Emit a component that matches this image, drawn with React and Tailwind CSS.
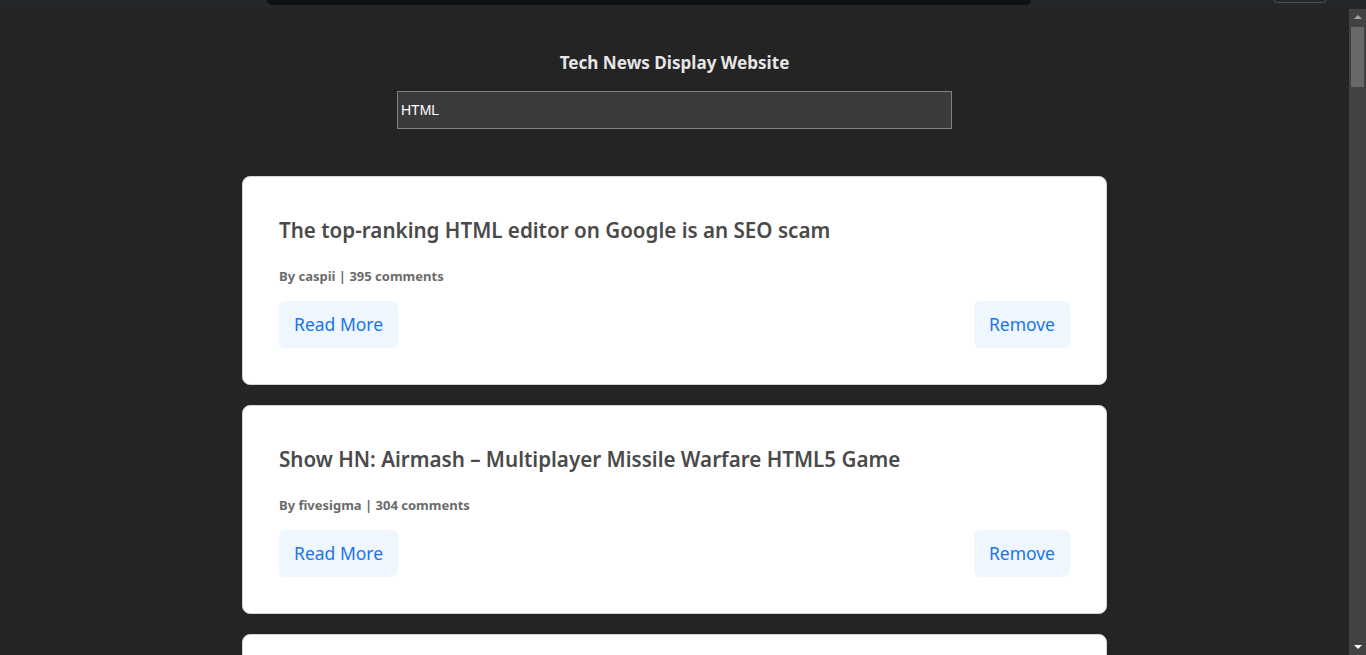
import { useState } from "react";

const STORIES = [
  {
    id: 1,
    title: "The top-ranking HTML editor on Google is an SEO scam",
    author: "caspii",
    comments: 395,
  },
  {
    id: 2,
    title: "Show HN: Airmash – Multiplayer Missile Warfare HTML5 Game",
    author: "fivesigma",
    comments: 304,
  },
  {
    id: 3,
    title: "HTML is the Web",
    author: "pcr910303",
    comments: 290,
  },
];

function StoryCard({ story, onRemove }) {
  return (
    <div className="rounded-[8px] border border-[#d4d4d4] bg-white px-[36px] pb-[36px] pt-[39px]">
      <h2 className="text-[20.6px] font-semibold leading-[28px] text-[#4a4a4a]">{story.title}</h2>
      <p className="mt-[23px] text-[13px] font-bold leading-[18px] text-[#6b6b6b]">
        By {story.author} | {story.comments} comments
      </p>
      <div className="mt-[16px] flex items-center justify-between">
        <button className="h-[47px] rounded-[6px] bg-[#eef6ff] px-[15px] text-[17.5px] text-[#1b75ea]">
          Read More
        </button>
        <button
          onClick={() => onRemove(story.id)}
          className="h-[47px] rounded-[6px] bg-[#eef6ff] px-[15px] text-[17.5px] text-[#1b75ea]"
        >
          Remove
        </button>
      </div>
    </div>
  );
}

function Scrollbar() {
  return (
    <div className="flex w-[17px] flex-col items-center bg-[#424242]">
      <div className="mt-[6px] h-0 w-0 border-x-[4px] border-b-[4px] border-x-transparent border-b-[#a3a3a3]" />
      <div className="mt-[8px] h-[60px] w-[13px] bg-[#686868]" />
      <div className="flex-1" />
      <div className="mb-[6px] h-0 w-0 border-x-[4px] border-t-[4px] border-x-transparent border-t-white" />
    </div>
  );
}

export default function App() {
  const [query, setQuery] = useState("HTML");
  const [stories, setStories] = useState(STORIES);

  const removeStory = (id) => setStories((s) => s.filter((x) => x.id !== id));

  return (
    <div
      className="flex h-[655px] flex-col overflow-hidden bg-[#242424]"
      style={{ fontFamily: '"Noto Sans", "Open Sans", sans-serif' }}
    >
      {/* top strip */}
      <div className="relative h-[9px] shrink-0 bg-[#22272c]">
        <div className="absolute left-[267px] top-0 h-[5px] w-[764px] rounded-b-[5px] bg-[#0f1115]" />
        <div className="absolute left-[1273px] top-[-6px] h-[9px] w-[54px] rounded-[5px] border border-[#4b5156]" />
      </div>

      <div className="flex min-h-0 flex-1">
        <div className="flex-1 overflow-hidden">
          <h1 className="mt-[42px] text-center text-[17.1px] font-bold leading-[24px] text-[#e6e6e6]">
            Tech News Display Website
          </h1>
          <div className="mt-[16px] flex justify-center">
            <input
              value={query}
              onChange={(e) => setQuery(e.target.value)}
              className="h-[38px] w-[555px] border border-[#808080] bg-[#3b3b3b] px-[3px] text-[14px] text-white outline-none"
              style={{ fontFamily: '"Liberation Sans", Arial, sans-serif' }}
            />
          </div>
          <div className="mx-auto mt-[47px] flex w-[865px] flex-col gap-[20px]">
            {stories.map((story) => (
              <StoryCard key={story.id} story={story} onRemove={removeStory} />
            ))}
          </div>
        </div>
        <Scrollbar />
      </div>
    </div>
  );
}
